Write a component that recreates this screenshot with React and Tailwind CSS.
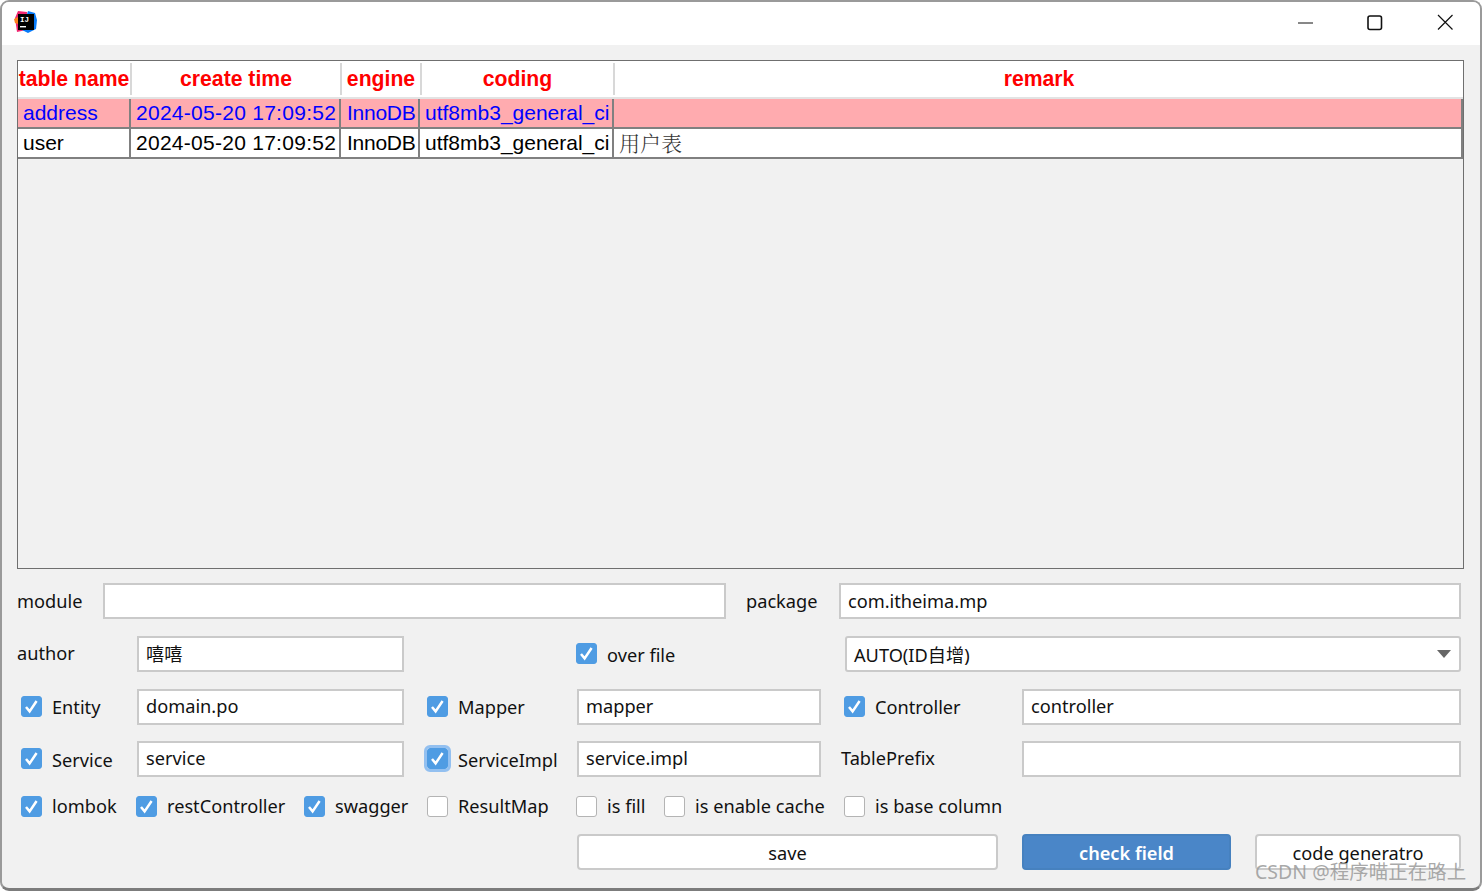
import React from "react";

const formFont = "font-['Noto_Sans','Noto_Sans_CJK_SC',sans-serif] text-[18.2px] text-[#111]";

const rows = [
  { name: "address", time: "2024-05-20 17:09:52", engine: "InnoDB", coding: "utf8mb3_general_ci", remark: "", selected: true },
  { name: "user", time: "2024-05-20 17:09:52", engine: "InnoDB", coding: "utf8mb3_general_ci", remark: "用户表" },
];

const Logo = () => (
  <svg width="24" height="24" viewBox="0 0 24 24" className="mb-[4px] block">
    <path d="M1 8 L4 1 L13 2 L12 20 L3 22 Z" fill="#f0266f" />
    <path d="M0 9 L4 7 L4 14 L1 13 Z" fill="#fc801d" />
    <path d="M14 1 L21 3 L23 10 L22 19 L14 23 L8 20 Z" fill="#087cfa" />
    <rect x="4" y="4" width="16" height="16" fill="#000" />
    <text x="6" y="11.5" fontSize="7.5" fontWeight="700" fill="#fff" fontFamily="Liberation Mono, monospace">IJ</text>
    <rect x="6" y="16" width="6" height="1.4" fill="#fff" />
  </svg>
);

const Checkbox = ({ checked, focus }) => (
  <span
    className={`relative flex h-[21px] w-[21px] shrink-0 items-center justify-center rounded-[3px] border ${
      checked ? "border-[#4f9ce3] bg-[#4f9ce3]" : "border-[#b4b4b4] bg-white"
    } ${focus ? "outline-[3px] outline-[#93c0f0]" : ""}`}
  >
    {checked && (
      <svg width="15" height="15" viewBox="0 0 15 15" fill="none">
        <path d="M2 8 L5.6 12.4 L12.6 2" stroke="#fff" strokeWidth="2.5" />
      </svg>
    )}
  </span>
);

const Check = ({ label, checked, focus, className = "", labelClass = "pt-[2px]" }) => (
  <div className={`flex items-center ${className}`}>
    <Checkbox checked={checked} focus={focus} />
    <span className={`ml-[10px] whitespace-nowrap ${labelClass}`}>{label}</span>
  </div>
);

const Input = ({ value = "", className = "" }) => (
  <div className={`flex h-[36px] items-center border-2 border-[#cacaca] bg-white pl-[7px] whitespace-nowrap ${className}`}>
    {value}
  </div>
);

const Button = ({ children, primary, className = "" }) => (
  <button
    className={`flex h-[36px] items-center justify-center rounded-[4px] border-2 pt-[4px] ${
      primary ? "border-[#4681bf] bg-[#4a86c8] font-semibold text-white" : "border-[#cacaca] bg-white"
    } ${className}`}
  >
    {children}
  </button>
);

export default function App() {
  return (
    <div className="h-[891px] w-[1482px] overflow-hidden bg-white">
      <div className={`relative h-[891px] overflow-hidden rounded-[9px] border-2 border-b-[3px] border-[#9a9a9a] border-b-[#7c7c7c] bg-[#f1f1f1] ${formFont}`}>
        <div className="flex h-[43px] items-center bg-white pl-[12px]">
          <Logo />
          <div className="mb-[2px] ml-auto flex items-center">
            <svg width="16" height="16" viewBox="0 0 16 16" className="mr-[53px]">
              <path d="M0 8 H15" stroke="#111" strokeWidth="1" />
            </svg>
            <svg width="16" height="16" viewBox="0 0 16 16" className="mr-[54px]">
              <rect x="1" y="1" width="13.5" height="13.5" rx="2" fill="none" stroke="#111" strokeWidth="1.6" />
            </svg>
            <svg width="17" height="17" viewBox="0 0 17 17" className="mr-[26px]">
              <path d="M1 1 L15.5 15.5 M15.5 1 L1 15.5" stroke="#111" strokeWidth="1.2" />
            </svg>
          </div>
        </div>

        <div className="mt-[15px] mr-[16px] ml-[15px] h-[509px] border border-[#6f6f6f] font-['Liberation_Sans',sans-serif]">
          <div className="grid h-[38px] grid-cols-[114px_210px_80px_193px_1fr] border-b-2 border-[#e3e3e3] bg-white text-[21.2px] font-bold text-[#ff0000]">
            {["table name", "create time", "engine", "coding", "remark"].map((title, i) => (
              <div
                key={title}
                className={`my-[2px] flex items-center justify-center whitespace-nowrap ${i < 4 ? "border-r-2 border-[#d8d8d8]" : ""}`}
              >
                {title}
              </div>
            ))}
          </div>
          {rows.map((row) => (
            <div
              key={row.name}
              className={`grid h-[30px] grid-cols-[113px_210px_79px_194px_1fr] border-r-2 border-b-2 border-[#808080] text-[21px] leading-none ${
                row.selected ? "bg-[#ffabaf] text-[#0000ff]" : "bg-white text-black"
              }`}
            >
              <div className="flex items-center border-r-2 border-[#808080] pb-px pl-[5px]">{row.name}</div>
              <div className="flex items-center border-r-2 border-[#808080] pb-px pl-[5px] tracking-[0.27px]">{row.time}</div>
              <div className="flex items-center border-r-2 border-[#808080] pb-px pl-[6px] tracking-[-0.25px]">{row.engine}</div>
              <div className="flex items-center border-r-2 border-[#808080] pb-px pl-[5px]">{row.coding}</div>
              <div className="flex items-center pb-[2px] pl-[5px] font-['Noto_Serif_CJK_SC','Noto_Sans_CJK_SC',serif] font-light text-[#333]">{row.remark}</div>
            </div>
          ))}
        </div>

        <div className="mt-[14px] mr-[19px] ml-[15px] flex flex-col">
          <div className="flex items-center">
            <span className="w-[86px] pt-[2px]">module</span>
            <Input className="w-[623px]" />
            <span className="ml-[20px] w-[93px] pt-[2px]">package</span>
            <Input className="flex-1 pt-[2px]" value="com.itheima.mp" />
          </div>

          <div className="mt-[17px] flex items-center">
            <span className="w-[120px]">author</span>
            <Input className="w-[267px] pt-[2px]" value="嘻嘻" />
            <Check className="ml-[172px] w-[269px]" label="over file" checked labelClass="pt-[4px]" />
            <div className="flex h-[36px] flex-1 items-center justify-between rounded-[3px] border-2 border-[#cacaca] bg-white pr-[8px] pl-[7px]">
              <span className="pt-[4px]">AUTO(ID自增)</span>
              <svg width="14" height="8" viewBox="0 0 14 8">
                <path d="M0 0 H14 L7 8 Z" fill="#666" />
              </svg>
            </div>
          </div>

          <div className="mt-[17px] flex items-center">
            <Check className="w-[120px] pl-[4px]" label="Entity" checked />
            <Input className="w-[267px]" value="domain.po" />
            <Check className="ml-[23px] w-[150px]" label="Mapper" checked />
            <Input className="w-[244px]" value="mapper" />
            <Check className="ml-[23px] w-[178px]" label="Controller" checked />
            <Input className="flex-1" value="controller" />
          </div>

          <div className="mt-[16px] flex items-center">
            <Check className="w-[120px] pl-[4px]" label="Service" checked labelClass="pt-[4px]" />
            <Input className="w-[267px]" value="service" />
            <Check className="ml-[23px] w-[150px]" label="ServiceImpl" checked focus labelClass="pt-[4px]" />
            <Input className="w-[244px]" value="service.impl" />
            <span className="ml-[20px] w-[181px]">TablePrefix</span>
            <Input className="flex-1" />
          </div>

          <div className="mt-[18px] flex h-[22px] items-center">
            <Check className="w-[119px] pl-[4px]" label="lombok" checked />
            <Check className="w-[168px]" label="restController" checked />
            <Check className="w-[123px]" label="swagger" checked />
            <Check className="w-[149px]" label="ResultMap" />
            <Check className="w-[88px]" label="is fill" />
            <Check className="w-[180px]" label="is enable cache" />
            <Check label="is base column" />
          </div>

          <div className="mt-[17px] flex pl-[560px]">
            <Button className="w-[421px]">save</Button>
            <Button primary className="ml-[24px] w-[209px]">check field</Button>
            <Button className="ml-[24px] flex-1">code generatro</Button>
          </div>
        </div>

        <div className="absolute top-[860px] left-[1253px] whitespace-nowrap font-['Noto_Sans','Noto_Sans_CJK_SC',sans-serif] text-[19.5px] leading-none text-[#9a9a9a]/85">
          CSDN @程序喵正在路上
        </div>
      </div>
    </div>
  );
}
